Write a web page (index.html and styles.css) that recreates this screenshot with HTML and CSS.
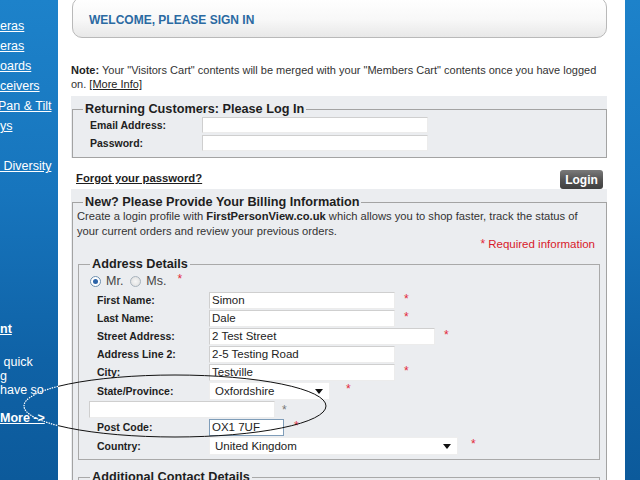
FILE: index.html
```html
<!DOCTYPE html>
<html>
<head>
<meta charset="utf-8">
<title>Sign In</title>
<link rel="stylesheet" href="styles.css">
</head>
<body>
<div class="page">
  <aside class="sidebar">
    <ul class="cats">
      <li><a href="#">eras</a></li>
      <li><a href="#">eras</a></li>
      <li><a href="#">oards</a></li>
      <li><a href="#">ceivers</a></li>
      <li><a href="#" class="cut">Pan &amp; Tilt</a></li>
      <li><a href="#">ys</a></li>
      <li></li>
      <li><a href="#">&nbsp;Diversity</a></li>
    </ul>
    <div class="promo">
      <a href="#" class="promo-title">nt</a>
      <p>&nbsp;quick<br>g<br>have so</p>
      <a href="#" class="more">More -&gt;</a>
    </div>
  </aside>

  <main class="main">
    <div class="welcome"><h1>WELCOME, PLEASE SIGN IN</h1></div>

    <p class="note"><b>Note:</b> Your "Visitors Cart" contents will be merged with your "Members Cart" contents once you have logged<br>on. <a href="#">[More Info]</a></p>

    <section class="panel login-panel">
      <fieldset class="box">
        <legend>Returning Customers: Please Log In</legend>
        <div class="login-grid">
          <label>Email Address:</label><input class="field" type="text">
          <label>Password:</label><input class="field" type="password">
        </div>
      </fieldset>
    </section>

    <div class="login-bar">
      <a href="#" class="forgot">Forgot your password?</a>
      <button class="btn-login">Login</button>
    </div>

    <section class="panel billing">
      <fieldset class="box">
        <legend>New? Please Provide Your Billing Information</legend>
        <p class="intro">Create a login profile with <b>FirstPersonView.co.uk</b> which allows you to shop faster, track the status of<br>your current orders and review your previous orders.</p>
        <p class="required"><span class="req">*</span> Required information</p>

        <fieldset class="sub">
          <legend>Address Details</legend>
          <div class="gender">
            <span class="radio on"></span><span class="rlabel">Mr.</span>
            <span class="radio"></span><span class="rlabel">Ms.</span>
            <span class="req star-g">*</span>
          </div>
          <div class="row"><label>First Name:</label><input class="field w186" value="Simon"><span class="req s9">*</span></div>
          <div class="row"><label>Last Name:</label><input class="field w186" value="Dale"><span class="req s9">*</span></div>
          <div class="row"><label>Street Address:</label><input class="field w226" value="2 Test Street"><span class="req s9">*</span></div>
          <div class="row"><label>Address Line 2:</label><input class="field w186" value="2-5 Testing Road"></div>
          <div class="row"><label>City:</label><input class="field w186" value="Testville"><span class="req s9">*</span></div>
          <div class="row tall"><label>State/Province:</label><div class="select w121"><span>Oxfordshire</span><i class="caret"></i></div><span class="req s16">*</span></div>
          <div class="row"><input class="field w186 other"><span class="req grey">*</span></div>
          <div class="row"><label>Post Code:</label><input class="field w75 focus" value="OX1 7UF"><span class="req s10">*</span></div>
          <div class="row tall"><label>Country:</label><div class="select w249"><span>United Kingdom</span><i class="caret"></i></div><span class="req s13">*</span></div>
        </fieldset>

        <fieldset class="sub next">
          <legend>Additional Contact Details</legend>
          <div class="spacer"></div>
        </fieldset>
      </fieldset>
    </section>
  </main>

  <div class="rightbar"></div>
</div>

<svg class="annot" width="640" height="480" viewBox="0 0 640 480">
  <defs>
    <clipPath id="clipR"><rect x="58" y="0" width="582" height="480"/></clipPath>
    <clipPath id="clipL"><rect x="0" y="0" width="58" height="480"/></clipPath>
  </defs>
  <ellipse cx="175" cy="406" rx="151" ry="31" fill="none" stroke="#111" stroke-width="1" clip-path="url(#clipR)"/>
  <ellipse cx="175" cy="406" rx="151" ry="31" fill="none" stroke="#fff" stroke-width="1.2" stroke-dasharray="1.5 1" clip-path="url(#clipL)"/>
</svg>
</body>
</html>
```

FILE: styles.css
```css
* { box-sizing: border-box; }
html, body { margin: 0; padding: 0; }
body {
  width: 640px;
  height: 480px;
  overflow: hidden;
  position: relative;
  background: #fff;
  color: #222;
  font-family: "Liberation Sans", Arial, sans-serif;
}

.page { display: flex; height: 480px; }

/* left navigation */
.sidebar {
  width: 58px;
  flex: none;
  overflow: hidden;
  color: #fff;
  background: linear-gradient(180deg, #1d82ca 0%, #1775bd 40%, #0f62a6 75%, #0c5a9b 100%);
  font-size: 12.5px;
}
.sidebar a { color: #fff; text-decoration: underline; white-space: nowrap; }
.cats { list-style: none; margin: 0; padding: 16px 0 0; }
.cats li { height: 20px; line-height: 20px; white-space: nowrap; }
.cats .cut { margin-left: -2px; }
.promo { margin-top: 146px; line-height: 14px; white-space: nowrap; }
.promo-title { font-weight: bold; }
.promo p { margin: 19px 0 0; }
.more { display: inline-block; margin-top: 14px; font-weight: bold; }

.rightbar {
  width: 15px;
  flex: none;
  background: linear-gradient(180deg, #1d82ca 0%, #1775bd 40%, #0f62a6 75%, #0c5a9b 100%);
}

/* main column */
.main {
  width: 567px;
  flex: none;
  padding: 0 18px 0 13px;
  overflow: hidden;
}

.welcome {
  margin: -3px 0 0 1px;
  height: 41px;
  border: 1px solid #b9b9b9;
  border-radius: 10px;
  background: linear-gradient(180deg, #ffffff 0%, #f8f8f8 55%, #e8e8e8 100%);
  padding: 15px 0 0 16px;
}
.welcome h1 {
  margin: 0;
  font-size: 12px;
  line-height: 14px;
  font-weight: bold;
  color: #2b6aa2;
}

.note {
  margin: 25px 0 5px;
  font-size: 11px;
  line-height: 14px;
  color: #333;
}
.note b { color: #222; }
.note a { color: #222; text-decoration: underline; }

.panel { background: #ebedf0; }

.box {
  margin: 0 0 0 1px;
  padding: 0;
  border: 1px solid #a3a3a3;
  min-width: 0;
}
.box > legend, .sub > legend {
  padding: 0 2px;
  font-size: 12.7px;
  line-height: 14px;
  font-weight: bold;
  color: #1e1e1e;
}
.box > legend { margin-left: 10px; }

.login-panel { padding: 6px 0 0 0; }
.login-panel .box { padding: 0 0 5px 17px; }
.login-panel .box > legend { margin-left: -7px; }
.login-grid {
  display: grid;
  grid-template-columns: 112px 226px;
  grid-auto-rows: 18px;
  align-items: center;
}
.login-grid label { font-size: 10.5px; font-weight: bold; }
.login-grid .field { height: 16px; }

.field {
  height: 17px;
  margin: 0;
  padding: 0 2px;
  border: 1px solid;
  border-color: #cfcfcf #ececec #ececec #cfcfcf;
  background: #fff;
  font-family: "Liberation Sans", Arial, sans-serif;
  font-size: 11.5px;
  color: #222;
  outline: none;
}
.field.focus { border-color: #7f9db9; }

.login-bar {
  height: 31px;
  display: flex;
  justify-content: space-between;
  align-items: flex-end;
  padding: 0 4px 0 5px;
}
.forgot {
  margin-bottom: 4px;
  font-size: 11.3px;
  line-height: 14px;
  font-weight: bold;
  color: #1e1e1e;
  text-decoration: underline;
}
.btn-login {
  width: 43px;
  height: 19px;
  padding: 0;
  border: 0;
  border-radius: 3px;
  background: linear-gradient(180deg, #7a7a7a 0%, #555 50%, #3f3f3f 100%);
  color: #fff;
  font-family: "Liberation Sans", Arial, sans-serif;
  font-size: 12px;
  font-weight: bold;
}

.billing { padding-top: 6px; height: 300px; }
.billing > .box { border-bottom: 0; }

.intro {
  margin: 0;
  padding-left: 4px;
  font-size: 11.2px;
  line-height: 15px;
  color: #333;
}
.intro b { color: #222; }
.required {
  margin: -2px 0 0;
  padding-right: 11px;
  text-align: right;
  font-size: 11.5px;
  line-height: 14px;
  color: #d8192a;
}

.sub {
  margin: 6px 6px 0 5px;
  padding: 0 0 4px 18px;
  border: 1px solid #a9a9a9;
  min-width: 0;
}
.sub > legend { margin-left: -7px; }
.sub.next { margin-top: 10px; }
.spacer { height: 20px; }

.gender {
  height: 20px;
  margin-left: -7px;
  display: flex;
  align-items: center;
  font-size: 12.5px;
  color: #444;
}
.radio {
  width: 11px;
  height: 11px;
  border-radius: 50%;
  border: 1px solid #a8b3bd;
  background: radial-gradient(circle, #f6f6f6 0%, #dcdcdc 100%);
  position: relative;
}
.radio.on { border-color: #6d8fae; background: #fff; }
.radio.on::after {
  content: "";
  position: absolute;
  left: 2px; top: 2px;
  width: 5px; height: 5px;
  border-radius: 50%;
  background: #2d64a8;
}
.rlabel { margin: 0 7px 0 5px; }
.star-g { margin-left: 4px; }

.row {
  height: 18px;
  display: flex;
  align-items: center;
}
.row.tall { height: 19px; }
.row label {
  width: 112px;
  flex: none;
  font-size: 10.5px;
  font-weight: bold;
  color: #1e1e1e;
}
.w186 { width: 186px; }
.w226 { width: 226px; }
.w75 { width: 75px; }
.w121 { width: 121px; }
.w249 { width: 249px; }
.other { margin-left: -8px; height: 17px; }

.select {
  height: 18px;
  display: flex;
  align-items: center;
  justify-content: space-between;
  padding: 0 6px 0 5px;
  background: #fff;
  border: 1px solid #eeeeee;
  font-size: 11.5px;
  color: #222;
}
.caret {
  width: 0;
  height: 0;
  border-left: 4px solid transparent;
  border-right: 4px solid transparent;
  border-top: 5px solid #111;
  margin-top: 2px;
}

.req {
  color: #e3283a;
  font-size: 12px;
  line-height: 12px;
  align-self: flex-start;
  margin-top: 2px;
}
.s9 { margin-left: 9px; }
.s10 { margin-left: 10px; }
.s13 { margin-left: 13px; }
.s16 { margin-left: 16px; }
.req.grey { color: #777; margin-left: 7px; margin-top: 4px; }

.annot {
  position: absolute;
  left: 0;
  top: 0;
  pointer-events: none;
}
```
